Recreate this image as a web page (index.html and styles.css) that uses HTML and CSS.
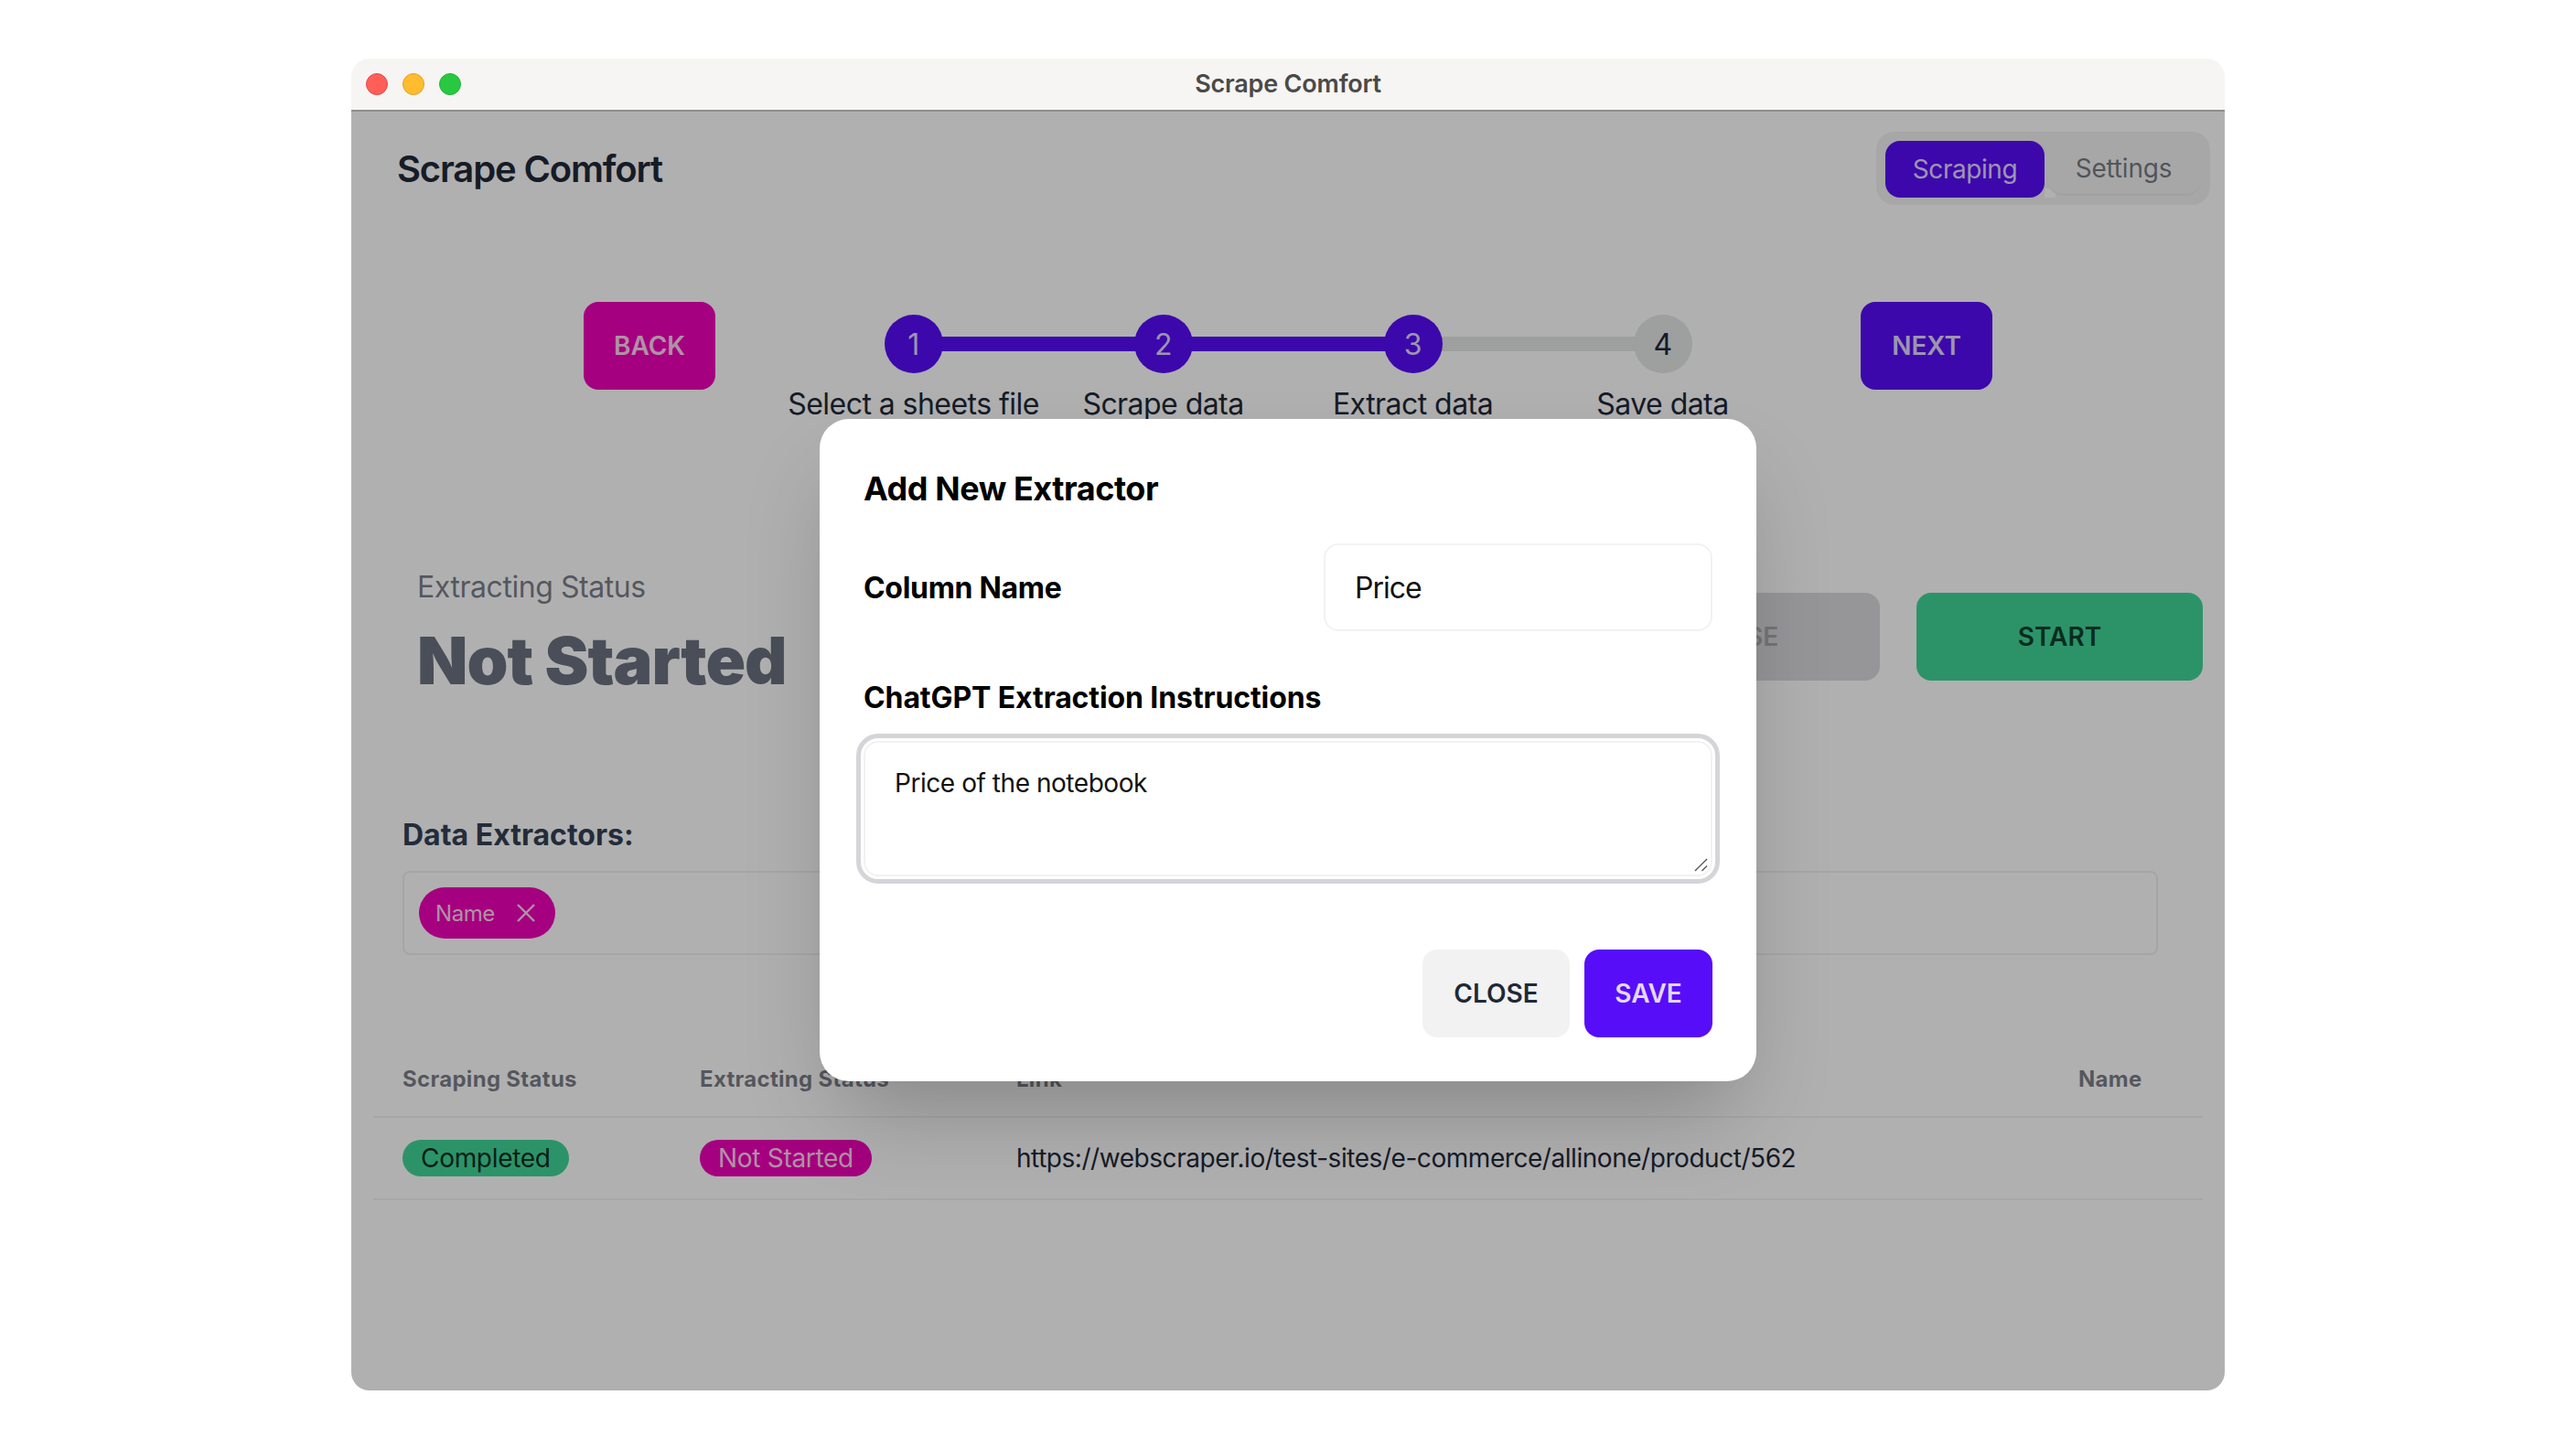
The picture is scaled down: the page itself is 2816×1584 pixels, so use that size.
FILE: index.html
```html
<!DOCTYPE html>
<html lang="en">
<head>
    <meta charset="UTF-8">
    <title>Scrape Comfort</title>
    <link rel="stylesheet" href="styles.css">
</head>
<body>

<div class="window">
    <div class="titlebar">
        <div class="lights">
            <span class="light light-red"></span>
            <span class="light light-yellow"></span>
            <span class="light light-green"></span>
        </div>
        <div class="window-title">Scrape Comfort</div>
    </div>

    <div class="app">
        <header class="app-header">
            <h1>Scrape Comfort</h1>
            <div class="tabs">
                <a class="tab tab-active">Scraping</a>
                <a class="tab tab-settings">Settings</a>
            </div>
        </header>

        <div class="wizard">
            <button class="btn btn-secondary btn-nav">Back</button>
            <ul class="steps">
                <li class="step step-done"><span class="step-num">1</span><span class="step-label">Select a sheets file</span></li>
                <li class="step step-done"><span class="step-num">2</span><span class="step-label">Scrape data</span></li>
                <li class="step step-done"><span class="step-num">3</span><span class="step-label">Extract data</span></li>
                <li class="step"><span class="step-num">4</span><span class="step-label">Save data</span></li>
            </ul>
            <button class="btn btn-primary btn-nav">Next</button>
        </div>

        <div class="status-row">
            <div class="stat">
                <div class="stat-title">Extracting Status</div>
                <div class="stat-value">Not Started</div>
            </div>
            <div class="status-actions">
                <button class="btn btn-wide btn-disabled">Pause</button>
                <button class="btn btn-wide btn-success">Start</button>
            </div>
        </div>

        <section class="extractors">
            <h2>Data Extractors:</h2>
            <div class="extractor-box">
                <span class="tag">Name
                    <svg class="tag-x" viewBox="0 0 20 20"><path d="M1 1 19 19M19 1 1 19"/></svg>
                </span>
            </div>
        </section>

        <table class="results">
            <thead>
                <tr>
                    <th class="col-scrape">Scraping Status</th>
                    <th class="col-extract">Extracting Status</th>
                    <th class="col-link">Link</th>
                    <th class="col-name">Name</th>
                </tr>
            </thead>
            <tbody>
                <tr>
                    <td><span class="badge badge-success">Completed</span></td>
                    <td><span class="badge badge-secondary">Not Started</span></td>
                    <td>https://webscraper.io/test-sites/e-commerce/allinone/product/562</td>
                    <td></td>
                </tr>
            </tbody>
        </table>

        <!-- Modal -->
        <div class="modal">
            <div class="modal-box">
                <h3>Add New Extractor</h3>
                <div class="field-row">
                    <label for="column-name">Column Name</label>
                    <input id="column-name" class="input" type="text" value="Price">
                </div>
                <label class="field-label" for="instructions">ChatGPT Extraction Instructions</label>
                <div class="textarea-wrap">
                    <textarea id="instructions" class="textarea">Price of the notebook</textarea>
                    <svg class="grip" viewBox="0 0 16 16"><path d="M1 15 15 1M9 15 15 9"/></svg>
                </div>
                <div class="modal-actions">
                    <button class="btn btn-ghost">Close</button>
                    <button class="btn btn-save">Save</button>
                </div>
            </div>
        </div>
    </div>
</div>

</body>
</html>
```

FILE: styles.css
```css
* {
    box-sizing: border-box;
}
body {
    font-family: 'Inter', sans-serif;
    letter-spacing: -0.45px;
    background-color: #fff;
    margin: 0;
    padding: 64px 384px;
    color: #1f2937;
}
.window {
    width: 2048px;
    height: 1456px;
    border-radius: 20px;
    overflow: hidden;
    display: flex;
    flex-direction: column;
}
.titlebar {
    height: 58px;
    flex: none;
    display: flex;
    align-items: center;
    justify-content: center;
    position: relative;
    padding-bottom: 2px;
    background-color: #f6f5f3;
    border-bottom: 2px solid #8e8e8e;
}
.lights {
    position: absolute;
    left: 16px;
    top: 16px;
    display: flex;
    gap: 16px;
}
.light {
    width: 24px;
    height: 24px;
    border-radius: 50%;
}
.light-red {
    background-color: #ff5f57;
    border: 1px solid #e5484d;
}
.light-yellow {
    background-color: #febc2e;
    border: 1px solid #e0a028;
}
.light-green {
    background-color: #28c840;
    border: 1px solid #24b23a;
}
.window-title {
    font-size: 27px;
    font-weight: 600;
    letter-spacing: -0.2px;
    color: #4a4a48;
}
.app {
    flex: 1;
    position: relative;
    background-color: #fff;
}

/* Header */
.app-header {
    display: flex;
    justify-content: space-between;
    align-items: center;
    padding: 22px 16px 0 50px;
}
h1 {
    margin: 0;
    font-size: 40px;
    font-weight: 600;
    letter-spacing: -1.15px;
    color: #1f2937;
}
.tabs {
    display: flex;
    align-items: flex-start;
    gap: 2px;
    height: 80px;
    padding: 10px 8px 8px 10px;
    border-radius: 20px;
    background-color: #f2f2f2;
    isolation: isolate;
}
.tab {
    display: flex;
    align-items: center;
    justify-content: center;
    height: 62px;
    font-size: 28px;
    border-radius: 16px;
}
.tab-active {
    width: 174px;
    background-color: #570df8;
    color: #e3d8fe;
}
.tab-settings {
    position: relative;
    width: 171px;
    height: 64px;
    margin-top: -4px;
    padding: 6px 2px 0 0;
    letter-spacing: -0.2px;
    background-color: #f2f2f2;
    border-bottom: 2px solid #e9e9e9;
    border-radius: 0 0 20px 20px;
    color: rgba(31, 41, 55, 0.6);
}
.tab-settings::before {
    content: "";
    position: absolute;
    left: -2px;
    bottom: -4px;
    width: 12px;
    height: 10px;
    background-color: #fff;
    z-index: -1;
}

/* Buttons */
.btn {
    height: 96px;
    padding: 0;
    border: none;
    border-radius: 16px;
    font-family: 'Inter', sans-serif;
    font-size: 28px;
    font-weight: 600;
    text-transform: uppercase;
}
.btn-primary {
    background-color: #570df8;
    color: #e3d8fe;
}
.btn-secondary {
    background-color: #f000b8;
    color: #ffd4f0;
}
.btn-nav {
    width: 144px;
}
.btn-wide {
    width: 313px;
}
.btn-disabled {
    background-color: #d9d9dc;
    color: #a9a9ae;
}
.btn-success {
    background-color: #41d699;
    color: #103f2e;
}
.btn-ghost {
    width: 161px;
    background-color: #f2f2f2;
    color: #1f2937;
}
.btn-save {
    width: 140px;
    background-color: #570df8;
    color: #e3d8fe;
}

/* Wizard */
.wizard {
    display: flex;
    justify-content: center;
    align-items: flex-start;
    gap: 80px;
    margin-top: 106px;
}
.steps {
    display: flex;
    margin: 14px 0 0;
    padding: 0;
    list-style: none;
}
.step {
    position: relative;
    width: 273px;
    display: flex;
    flex-direction: column;
    align-items: center;
    gap: 10px;
}
.step::before {
    content: "";
    position: absolute;
    top: 24px;
    left: -50%;
    width: 100%;
    height: 16px;
    background-color: #e5e6e6;
}
.step:first-child::before {
    display: none;
}
.step-done::before {
    background-color: #570df8;
}
.step-num {
    position: relative;
    z-index: 1;
    width: 64px;
    height: 64px;
    display: flex;
    align-items: center;
    justify-content: center;
    border-radius: 50%;
    font-size: 32px;
    background-color: #e5e6e6;
}
.step-done .step-num {
    background-color: #570df8;
    color: #e3d8fe;
}
.step-label {
    font-size: 32px;
    line-height: 48px;
    letter-spacing: -0.55px;
    white-space: nowrap;
}

/* Status */
.status-row {
    display: flex;
    justify-content: space-between;
    align-items: flex-start;
    margin-top: 156px;
    padding: 0 24px 0 72px;
}
.stat-title {
    font-size: 32px;
    line-height: 40px;
    color: rgba(31, 41, 55, 0.6);
}
.stat-value {
    margin-top: 20px;
    font-size: 72px;
    line-height: 80px;
    font-weight: 900;
    letter-spacing: -1px;
    color: #6b7280;
}
.status-actions {
    display: flex;
    gap: 40px;
    margin-top: 26px;
}

/* Extractors */
.extractors {
    margin-top: 127px;
    padding: 0 73px 0 56px;
}
h2 {
    margin: 0 0 15px;
    font-size: 32px;
    line-height: 48px;
    font-weight: 700;
    letter-spacing: 0;
    color: #334155;
}
.extractor-box {
    display: flex;
    padding: 16px;
    border: 2px solid #f0f0f5;
    border-radius: 8px;
}
.tag {
    display: flex;
    align-items: center;
    gap: 24px;
    height: 56px;
    padding: 0 22px 0 18px;
    border-radius: 28px;
    font-size: 24px;
    background-color: #f000b8;
    color: #ffd4f0;
}
.tag-x {
    width: 20px;
    height: 20px;
    fill: none;
    stroke: #ffd4f0;
    stroke-width: 2.4;
}

/* Table */
.results {
    width: 2000px;
    margin: 96px 24px 0;
    border-collapse: collapse;
    table-layout: fixed;
}
.results th {
    padding: 24px 32px;
    height: 80px;
    text-align: left;
    font-size: 24px;
    line-height: 32px;
    font-weight: 700;
    letter-spacing: 0.3px;
    color: rgba(31, 41, 55, 0.6);
    border-bottom: 2px solid #f2f2f2;
}
.results td {
    height: 90px;
    padding: 0 32px;
    font-size: 28px;
    border-bottom: 2px solid #f2f2f2;
    white-space: nowrap;
}
.col-scrape {
    width: 325px;
}
.col-extract {
    width: 346px;
}
.col-name {
    width: 168px;
}
.badge {
    display: inline-flex;
    align-items: center;
    height: 40px;
    padding: 0 20px;
    border-radius: 20px;
    letter-spacing: -0.3px;
    vertical-align: middle;
}
.badge-success {
    background-color: #41d699;
    color: #0c2e22;
}
.badge-secondary {
    background-color: #f000b8;
    color: #ffd4f0;
}

/* Modal */
.modal {
    position: absolute;
    inset: 0;
    z-index: 2;
    display: flex;
    align-items: center;
    justify-content: center;
    padding-bottom: 2px;
    background-color: rgba(0, 0, 0, 0.31);
}
.modal-box {
    width: 1024px;
    height: 724px;
    padding: 48px;
    border-radius: 32px;
    background-color: #fff;
    color: #000;
    box-shadow: 0 50px 100px -24px rgba(0, 0, 0, 0.25);
}
h3 {
    margin: 0;
    font-size: 36px;
    line-height: 56px;
    font-weight: 700;
}
.field-row {
    display: flex;
    justify-content: space-between;
    align-items: center;
    margin-top: 32px;
    font-size: 32px;
    font-weight: 700;
    letter-spacing: -0.3px;
}
.input {
    width: 425px;
    height: 96px;
    padding: 0 32px;
    border: 2px solid #f2f2f2;
    border-radius: 16px;
    font-family: 'Inter', sans-serif;
    font-size: 32px;
    letter-spacing: -1px;
    color: #111;
    outline: none;
}
.field-label {
    display: block;
    margin-top: 49px;
    font-size: 32px;
    line-height: 48px;
    font-weight: 700;
    letter-spacing: -0.1px;
}
.textarea-wrap {
    position: relative;
    margin-top: 23px;
}
.textarea {
    display: block;
    width: 928px;
    height: 148px;
    padding: 24px 32px;
    border: 2px solid #f2f2f2;
    border-radius: 16px;
    font-family: 'Inter', sans-serif;
    font-size: 28px;
    line-height: 40px;
    letter-spacing: -0.45px;
    color: #111;
    outline: 5px solid #d4d5d9;
    outline-offset: 3px;
    resize: none;
}
.grip {
    position: absolute;
    right: 5px;
    bottom: 5px;
    width: 15px;
    height: 15px;
    fill: none;
    stroke: #555;
    stroke-width: 1.4;
}
.modal-actions {
    display: flex;
    justify-content: flex-end;
    gap: 16px;
    margin-top: 80px;
}
```
